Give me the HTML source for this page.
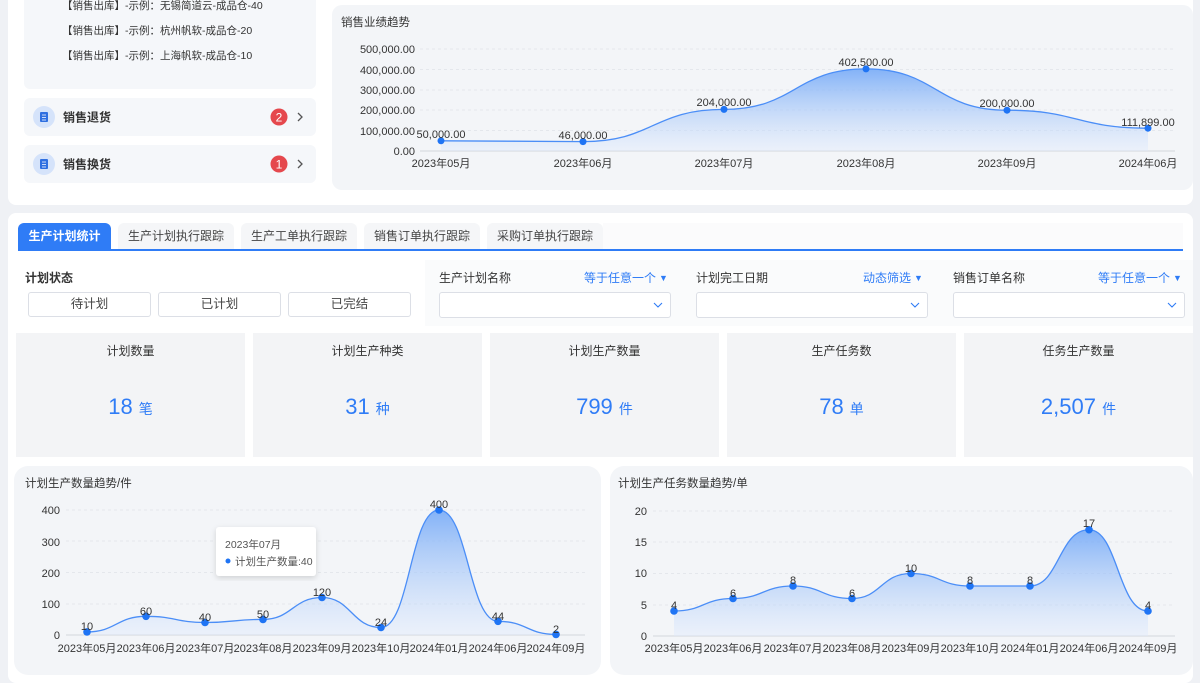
<!DOCTYPE html>
<html><head><meta charset="utf-8"><style>
*{margin:0;padding:0;box-sizing:border-box}
body{width:1200px;height:678px;overflow:hidden;background:#eff1f5;font-family:"Liberation Sans","Noto Sans CJK SC",sans-serif;color:#333;position:relative}
.a{position:absolute}
.card{background:#fff;border-radius:8px}
.lt{font-size:10.5px;color:#333;white-space:nowrap}
.row{background:#f5f7fa;border-radius:6px}
.tab{position:absolute;top:223px;height:27px;background:#f5f6f8;border-radius:6px 6px 0 0;font-size:12px;color:#444;text-align:center;line-height:27px}
.btn{position:absolute;top:292px;height:25px;border:1px solid #dcdfe6;border-radius:3px;background:#fff;font-size:12.5px;text-align:center;line-height:23px;color:#444}
.fl{position:absolute;top:269px;font-size:12px;color:#333}
.fr{position:absolute;top:269px;font-size:12px;color:#2f7cf6}
.fr i{font-style:normal;font-size:9px;margin-left:3px;vertical-align:1px}
.sel{position:absolute;top:292px;height:26px;border:1px solid #dcdfe6;border-radius:3px;background:#fff}
.stat{position:absolute;top:333px;width:229px;height:124px;background:#f3f4f6;text-align:center}
.stat .t{margin-top:9px;font-size:12px;color:#333}
.stat .n{margin-top:35px;font-size:22px;color:#2f7cf6}
.stat .n span{font-size:14px}
</style></head><body>
<div class="a card" style="left:8px;top:-10px;width:1185px;height:215px"></div>
<div class="a row" style="left:24px;top:-5px;width:292px;height:94px"></div>
<div class="a lt" style="left:62px;top:-2px">【销售出库】-示例：无锡简道云-成品仓-40</div>
<div class="a lt" style="left:62px;top:23px">【销售出库】-示例：杭州帆软-成品仓-20</div>
<div class="a lt" style="left:62px;top:48px">【销售出库】-示例：上海帆软-成品仓-10</div>
<div class="a row" style="left:24px;top:98px;width:292px;height:38px"></div>
<div class="a row" style="left:24px;top:145px;width:292px;height:38px"></div>
<svg class="a" style="left:0;top:0" width="340" height="200">
<circle cx="44" cy="117" r="11" fill="#d5e3fa"/><rect x="40" y="112" width="8" height="10" rx="1" fill="#2f6fe0"/><path d="M42 115h4M42 117.5h4M42 120h4" stroke="#fff" stroke-width=".8"/>
<circle cx="44" cy="164" r="11" fill="#d5e3fa"/><rect x="40" y="159" width="8" height="10" rx="1" fill="#2f6fe0"/><path d="M42 162h4M42 164.5h4M42 167h4" stroke="#fff" stroke-width=".8"/>
<text x="63" y="121.5" font-size="12" font-weight="bold" fill="#333">销售退货</text>
<text x="63" y="168.5" font-size="12" font-weight="bold" fill="#333">销售换货</text>
<circle cx="279" cy="117" r="8.5" fill="#e5484d"/><text x="279" y="121.5" font-size="12" fill="#fff" text-anchor="middle">2</text>
<circle cx="279" cy="164" r="8.5" fill="#e5484d"/><text x="279" y="168.5" font-size="12" fill="#fff" text-anchor="middle">1</text>
<path d="M298 113l4 4-4 4M298 160l4 4-4 4" stroke="#555" stroke-width="1.3" fill="none"/>
</svg>
<div class="a" style="left:332px;top:5px;width:861px;height:185px;background:#f3f5f8;border-radius:10px"></div>

<div class="a card" style="left:8px;top:213px;width:1185px;height:470px"></div>
<div class="tab" style="left:18px;width:93px;background:#2f7cf6;color:#fff;font-weight:bold">生产计划统计</div>
<div class="tab" style="left:118px;width:116px">生产计划执行跟踪</div>
<div class="tab" style="left:241px;width:116px">生产工单执行跟踪</div>
<div class="tab" style="left:364px;width:116px">销售订单执行跟踪</div>
<div class="tab" style="left:487px;width:116px">采购订单执行跟踪</div>
<div class="a" style="left:603px;top:223px;width:580px;height:27px;background:#fbfbfc"></div>
<div class="a" style="left:18px;top:249px;width:1165px;height:2px;background:#2f7cf6"></div>

<div class="fl" style="left:25px;font-weight:bold">计划状态</div>
<div class="btn" style="left:28px;width:123px">待计划</div>
<div class="btn" style="left:158px;width:123px">已计划</div>
<div class="btn" style="left:288px;width:123px">已完结</div>
<div class="a" style="left:425px;top:260px;width:260px;height:66px;background:#fafbfc"></div>
<div class="a" style="left:682px;top:260px;width:260px;height:66px;background:#fafbfc"></div>
<div class="a" style="left:939px;top:260px;width:254px;height:66px;background:#fafbfc"></div>
<div class="fl" style="left:439px">生产计划名称</div><div class="fr" style="left:584px">等于任意一个<i>▼</i></div>
<div class="fl" style="left:696px">计划完工日期</div><div class="fr" style="left:863px">动态筛选<i>▼</i></div>
<div class="fl" style="left:953px">销售订单名称</div><div class="fr" style="left:1098px">等于任意一个<i>▼</i></div>
<div class="sel" style="left:439px;width:232px"></div>
<div class="sel" style="left:696px;width:232px"></div>
<div class="sel" style="left:953px;width:232px"></div>
<svg class="a" style="left:0;top:0" width="1200" height="330"><path d="M654 303l4 4 4-4M911 303l4 4 4-4M1168 303l4 4 4-4" stroke="#2f7cf6" fill="none" stroke-width="1.1"/></svg>

<div class="stat" style="left:16px"><div class="t">计划数量</div><div class="n">18 <span>笔</span></div></div>
<div class="stat" style="left:253px"><div class="t">计划生产种类</div><div class="n">31 <span>种</span></div></div>
<div class="stat" style="left:490px"><div class="t">计划生产数量</div><div class="n">799 <span>件</span></div></div>
<div class="stat" style="left:727px"><div class="t">生产任务数</div><div class="n">78 <span>单</span></div></div>
<div class="stat" style="left:964px"><div class="t">任务生产数量</div><div class="n">2,507 <span>件</span></div></div>

<div class="a" style="left:14px;top:466px;width:587px;height:209px;background:#f3f5f8;border-radius:14px"></div>
<div class="a" style="left:610px;top:466px;width:583px;height:209px;background:#f3f5f8;border-radius:14px"></div>

<svg class="a" style="left:0;top:0" width="1200" height="678" font-family="Liberation Sans,Noto Sans CJK SC,sans-serif">
<defs>
<linearGradient id="g" x1="0" y1="0" x2="0" y2="1"><stop offset="0" stop-color="#6fa6f7" stop-opacity=".85"/><stop offset="1" stop-color="#dfeafc" stop-opacity=".4"/></linearGradient>
<filter id="sh"><feDropShadow dx="0" dy="2" stdDeviation="3" flood-opacity=".15"/></filter>
</defs>
<text x="341" y="26" font-size="11.5" fill="#333">销售业绩趋势</text>
<g font-size="11" fill="#333" text-anchor="end">
<text x="415" y="53">500,000.00</text><text x="415" y="74">400,000.00</text><text x="415" y="94">300,000.00</text><text x="415" y="114">200,000.00</text><text x="415" y="135">100,000.00</text><text x="415" y="155">0.00</text></g>
<g stroke="#e4e7ec" stroke-dasharray="3 3"><path d="M420 49H1175M420 69.5H1175M420 90H1175M420 110H1175M420 130.5H1175"/></g>
<path d="M420 151H1175" stroke="#d3d6db"/>
<path d="M441 140.8 C512 140.8 512 141.6 583 141.6 C653 141.6 653 109.4 724 109.4 C795 109.4 795 68.9 866 68.9 C936 68.9 936 110.2 1007 110.2 C1077 110.2 1077 128.2 1148 128.2 L1148 151 L441 151Z" fill="url(#g)"/>
<path d="M441 140.8 C512 140.8 512 141.6 583 141.6 C653 141.6 653 109.4 724 109.4 C795 109.4 795 68.9 866 68.9 C936 68.9 936 110.2 1007 110.2 C1077 110.2 1077 128.2 1148 128.2" fill="none" stroke="#4b8ef7" stroke-width="1.3"/>
<g fill="#1f74f4"><circle cx="441" cy="140.8" r="3.5"/><circle cx="583" cy="141.6" r="3.5"/><circle cx="724" cy="109.4" r="3.5"/><circle cx="866" cy="68.9" r="3.5"/><circle cx="1007" cy="110.2" r="3.5"/><circle cx="1148" cy="128.2" r="3.5"/></g>
<g font-size="11" fill="#333" text-anchor="middle">
<text x="441" y="138">50,000.00</text><text x="583" y="139">46,000.00</text><text x="724" y="106">204,000.00</text><text x="866" y="66">402,500.00</text><text x="1007" y="107">200,000.00</text><text x="1148" y="126">111,899.00</text>
<text x="441" y="167">2023年05月</text><text x="583" y="167">2023年06月</text><text x="724" y="167">2023年07月</text><text x="866" y="167">2023年08月</text><text x="1007" y="167">2023年09月</text><text x="1148" y="167">2024年06月</text></g>

<text x="25" y="487" font-size="11.5" fill="#333">计划生产数量趋势/件</text>
<g font-size="11" fill="#333" text-anchor="end"><text x="60" y="514">400</text><text x="60" y="546">300</text><text x="60" y="577">200</text><text x="60" y="608">100</text><text x="60" y="639">0</text></g>
<g stroke="#e4e7ec" stroke-dasharray="3 3"><path d="M66 510H585M66 541H585M66 572.5H585M66 604H585"/></g>
<path d="M66 635H585" stroke="#d3d6db"/>
<path d="M87 631.9 C116 631.9 117 616.3 146 616.3 C175 616.3 176 622.5 205 622.5 C234 622.5 234 619.4 263 619.4 C292 619.4 293 597.5 322 597.5 C351 597.5 352 627.5 381 627.5 C410 627.5 410 510 439 510 C468 510 469 621.3 498 621.3 C527 621.3 527 634.4 556 634.4 L556 635 L87 635Z" fill="url(#g)"/>
<path d="M87 631.9 C116 631.9 117 616.3 146 616.3 C175 616.3 176 622.5 205 622.5 C234 622.5 234 619.4 263 619.4 C292 619.4 293 597.5 322 597.5 C351 597.5 352 627.5 381 627.5 C410 627.5 410 510 439 510 C468 510 469 621.3 498 621.3 C527 621.3 527 634.4 556 634.4" fill="none" stroke="#4b8ef7" stroke-width="1.3"/>
<g fill="#1f74f4"><circle cx="87" cy="631.9" r="3.8"/><circle cx="146" cy="616.3" r="3.8"/><circle cx="205" cy="622.5" r="3.8"/><circle cx="263" cy="619.4" r="3.8"/><circle cx="322" cy="597.5" r="3.8"/><circle cx="381" cy="627.5" r="3.8"/><circle cx="439" cy="510" r="3.8"/><circle cx="498" cy="621.3" r="3.8"/><circle cx="556" cy="634.4" r="3.8"/></g>
<g font-size="11" fill="#333" text-anchor="middle">
<text x="87" y="630">10</text><text x="146" y="615">60</text><text x="205" y="621">40</text><text x="263" y="618">50</text><text x="322" y="596">120</text><text x="381" y="626">24</text><text x="439" y="508">400</text><text x="498" y="620">44</text><text x="556" y="633">2</text>
<text x="87" y="652">2023年05月</text><text x="146" y="652">2023年06月</text><text x="205" y="652">2023年07月</text><text x="263" y="652">2023年08月</text><text x="322" y="652">2023年09月</text><text x="381" y="652">2023年10月</text><text x="439" y="652">2024年01月</text><text x="498" y="652">2024年06月</text><text x="556" y="652">2024年09月</text></g>
<rect x="216" y="527" width="100" height="49" rx="3" fill="#fff" filter="url(#sh)"/>
<text x="225" y="548" font-size="10.5" fill="#555">2023年07月</text>
<circle cx="228" cy="561" r="2.5" fill="#1f74f4"/><text x="235" y="565" font-size="10.5" fill="#555">计划生产数量:40</text>

<text x="618" y="487" font-size="11.5" fill="#333">计划生产任务数量趋势/单</text>
<g font-size="11" fill="#333" text-anchor="end"><text x="647" y="515">20</text><text x="647" y="546">15</text><text x="647" y="577">10</text><text x="647" y="609">5</text><text x="647" y="640">0</text></g>
<g stroke="#e4e7ec" stroke-dasharray="3 3"><path d="M653 511H1175M653 542H1175M653 573.5H1175M653 605H1175"/></g>
<path d="M653 636H1175" stroke="#d3d6db"/>
<path d="M674 611 C704 611 703 598.5 733 598.5 C763 598.5 763 586 793 586 C822 586 822 598.5 852 598.5 C881 598.5 881 573.5 911 573.5 C940 573.5 940 586 970 586 C1000 586 1000 586 1030 586 C1059 586 1059 529.75 1089 529.75 C1118 529.75 1118 611 1148 611 L1148 636 L674 636Z" fill="url(#g)"/>
<path d="M674 611 C704 611 703 598.5 733 598.5 C763 598.5 763 586 793 586 C822 586 822 598.5 852 598.5 C881 598.5 881 573.5 911 573.5 C940 573.5 940 586 970 586 C1000 586 1000 586 1030 586 C1059 586 1059 529.75 1089 529.75 C1118 529.75 1118 611 1148 611" fill="none" stroke="#4b8ef7" stroke-width="1.3"/>
<g fill="#1f74f4"><circle cx="674" cy="611" r="3.8"/><circle cx="733" cy="598.5" r="3.8"/><circle cx="793" cy="586" r="3.8"/><circle cx="852" cy="598.5" r="3.8"/><circle cx="911" cy="573.5" r="3.8"/><circle cx="970" cy="586" r="3.8"/><circle cx="1030" cy="586" r="3.8"/><circle cx="1089" cy="529.75" r="3.8"/><circle cx="1148" cy="611" r="3.8"/></g>
<g font-size="11" fill="#333" text-anchor="middle">
<text x="674" y="609">4</text><text x="733" y="597">6</text><text x="793" y="584">8</text><text x="852" y="597">6</text><text x="911" y="572">10</text><text x="970" y="584">8</text><text x="1030" y="584">8</text><text x="1089" y="527">17</text><text x="1148" y="609">4</text>
<text x="674" y="652">2023年05月</text><text x="733" y="652">2023年06月</text><text x="793" y="652">2023年07月</text><text x="852" y="652">2023年08月</text><text x="911" y="652">2023年09月</text><text x="970" y="652">2023年10月</text><text x="1030" y="652">2024年01月</text><text x="1089" y="652">2024年06月</text><text x="1148" y="652">2024年09月</text></g>
</svg>
</body></html>
